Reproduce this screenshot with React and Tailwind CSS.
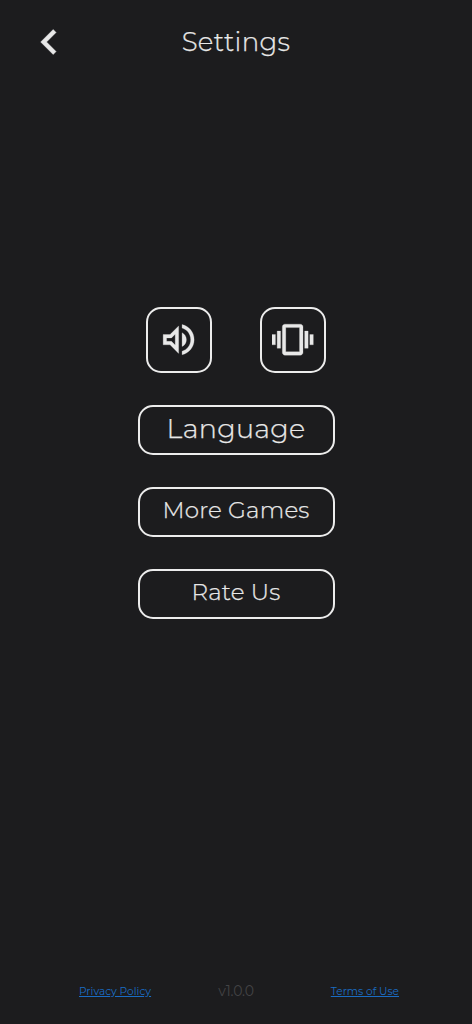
const BackIcon = () => (
  <svg className="w-[50px] h-[50px]" viewBox="0 0 24 24" fill="currentColor" stroke="currentColor" strokeWidth="0.2">
    <path d="M15.41 7.41L14 6l-6 6 6 6 1.41-1.41L10.83 12z" />
  </svg>
);

const VolumeIcon = () => (
  <svg className="w-[41.3px] h-[41.3px] shrink-0" viewBox="0 0 24 24" fill="currentColor" stroke="currentColor" strokeWidth="0.15">
    <path d="M3 9v6h4l5 5V4L7 9H3zm7-.17v6.34L7.83 13H5v-2h2.83L10 8.83zM16.5 12c0-1.77-1.02-3.29-2.5-4.03v8.05c1.48-.73 2.5-2.25 2.5-4.02zM14 3.23v2.06c2.89.86 5 3.54 5 6.71s-2.11 5.85-5 6.71v2.06c4.01-.91 7-4.49 7-8.77 0-4.28-2.99-7.86-7-8.77z" />
  </svg>
);

const VibrationIcon = () => (
  <svg className="w-[41.3px] h-[41.3px] shrink-0" viewBox="0 0 24 24" fill="currentColor" stroke="currentColor" strokeWidth="0.15">
    <path d="M0 15h2V9H0v6zm3 2h2V7H3v10zm19-8v6h2V9h-2zm-3 8h2V7h-2v10zM16.5 3h-9C6.67 3 6 3.67 6 4.5v15c0 .83.67 1.5 1.5 1.5h9c.83 0 1.5-.67 1.5-1.5v-15c0-.83-.67-1.5-1.5-1.5zM16 19H8V5h8v14z" />
  </svg>
);

const IconButton = ({ label, children }) => (
  <button
    aria-label={label}
    className="w-[66px] h-[66px] flex items-center justify-center border-2 border-[#ececec] rounded-[15px]"
  >
    {children}
  </button>
);

const MenuButton = ({ className, children }) => (
  <button
    className={`w-[197px] h-[50px] flex items-center justify-center border-2 border-[#ececec] rounded-[15px] whitespace-nowrap font-light [-webkit-text-stroke:0.25px_#e8e8e8] ${className}`}
  >
    {children}
  </button>
);

export default function App() {
  return (
    <div className="w-full h-screen flex flex-col bg-[#1c1c1e] text-[#e8e8e8] font-['Montserrat','Inter',sans-serif] overflow-hidden">
      <header className="h-[83px] grid grid-cols-[1fr_auto_1fr] items-center px-6">
        <button aria-label="Back" className="justify-self-start">
          <BackIcon />
        </button>
        <h1 className="text-[26px] font-light tracking-[0.3px] pt-px [-webkit-text-stroke:0.25px_#e8e8e8]">Settings</h1>
      </header>

      <main className="flex-1 flex flex-col items-center pt-56">
        <div className="flex gap-12">
          <IconButton label="Sound">
            <VolumeIcon />
          </IconButton>
          <IconButton label="Vibration">
            <VibrationIcon />
          </IconButton>
        </div>
        <div className="flex flex-col gap-8 mt-8">
          <MenuButton className="text-[27px] tracking-[0.3px] pb-[2px]">Language</MenuButton>
          <MenuButton className="text-[23px] tracking-[0.2px] pb-[3px]">More Games</MenuButton>
          <MenuButton className="text-[23px] tracking-[0.2px] pb-[3px]">Rate Us</MenuButton>
        </div>
      </main>

      <footer className="h-[66px] grid grid-cols-[1fr_auto_1fr] items-center px-[79px] text-[#1a6cc4]">
        <a href="#privacy" className="justify-self-start pt-px text-[10.6px] underline">Privacy Policy</a>
        <span className="text-sm text-[#434345] tracking-[-0.2px]">v1.0.0</span>
        <a href="#terms" className="justify-self-end -mr-[6px] pt-px text-[10.6px] underline">Terms of Use</a>
      </footer>
    </div>
  );
}
